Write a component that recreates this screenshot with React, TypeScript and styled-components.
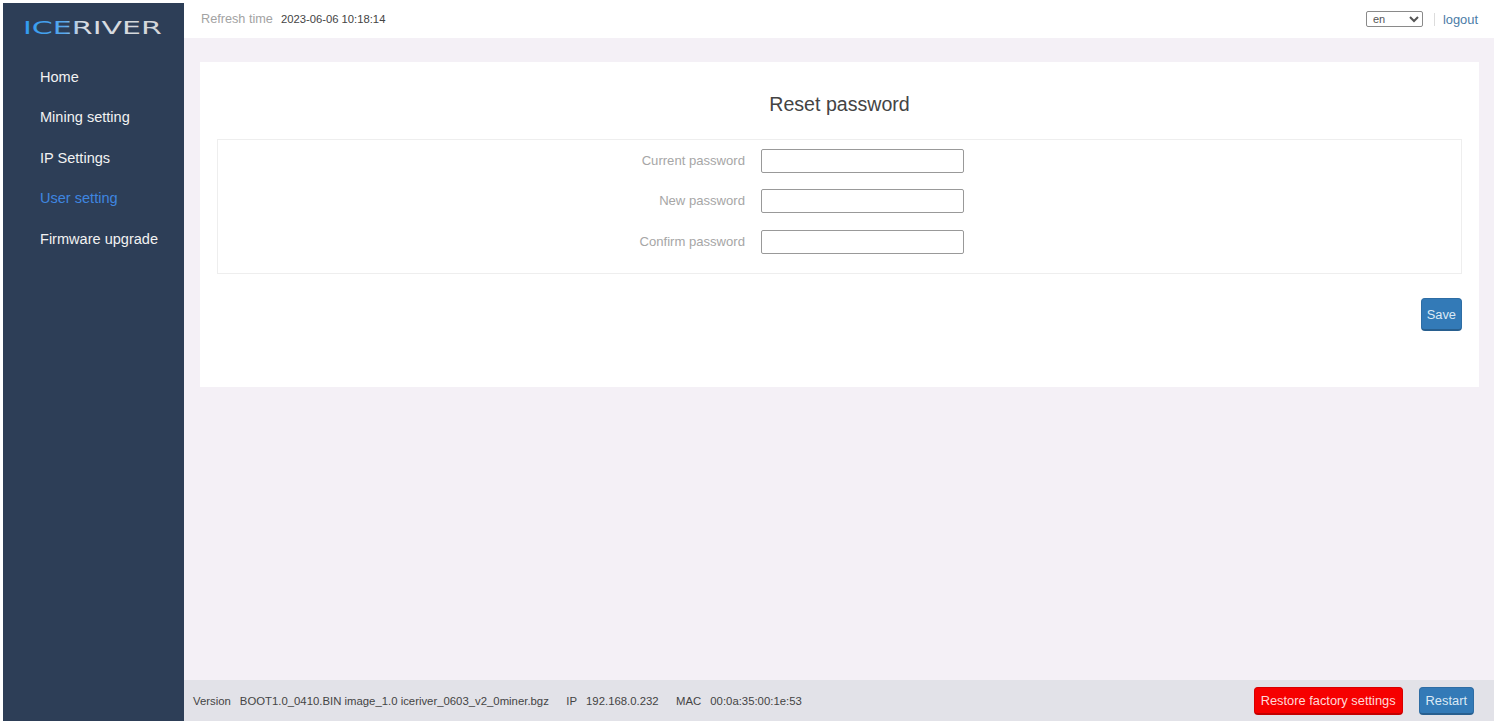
import styled, { createGlobalStyle } from "styled-components";

const GlobalStyle = createGlobalStyle`
  html, body {
    margin: 0;
    padding: 0;
    background: #fff;
    font-family: "Liberation Sans", Arial, sans-serif;
  }
`;

const Page = styled.div`
  display: flex;
  width: 1491px;
  height: 718px;
  margin: 3px 0 5px 3px;
`;

const Sidebar = styled.aside`
  width: 181px;
  flex-shrink: 0;
  background: #2d3e57;
`;

const LogoWrap = styled.div`
  height: 48px;
  padding-left: 19px;
  display: flex;
  align-items: center;
`;

const Nav = styled.nav`
  display: flex;
  flex-direction: column;
  padding: 5.5px 0 0 37px;
`;

const NavItem = styled.a<{ $active?: boolean }>`
  height: 40.5px;
  line-height: 40.5px;
  font-size: 14.55px;
  color: ${(p) => (p.$active ? "#3f86e0" : "#f2f2f2")};
  cursor: pointer;
`;

const Content = styled.div`
  flex: 1;
  display: flex;
  flex-direction: column;
  background: #f4f0f6;
`;

const Header = styled.header`
  height: 35px;
  background: #fff;
  display: flex;
  align-items: center;
  justify-content: space-between;
  padding: 0 16px 0 17px;
`;

const RefreshInfo = styled.div`
  display: flex;
  align-items: center;
  gap: 8px;
  margin-top: -3px;
`;

const RefreshLabel = styled.span`
  font-size: 12.7px;
  color: #a3a3a3;
`;

const RefreshValue = styled.span`
  font-size: 11.25px;
  color: #444;
`;

const HeaderRight = styled.div`
  display: flex;
  align-items: center;
  margin-top: -3px;
`;

const LangSelect = styled.select`
  width: 57px;
  height: 16px;
  padding: 0 0 0 2px;
  font-family: "Liberation Sans", Arial, sans-serif;
  font-size: 11px;
  color: #555;
  background: #fff;
  border: 1px solid #8a8a8a;
  border-radius: 2px;
`;

const Logout = styled.a`
  margin-left: 11px;
  padding-left: 8px;
  border-left: 1px solid #dcdcdc;
  font-size: 12.9px;
  line-height: 13px;
  color: #4a7ba6;
  cursor: pointer;
`;

const Main = styled.main`
  flex: 1;
  padding: 24px 15px 0 16px;
`;

const Card = styled.section`
  height: 325px;
  box-sizing: border-box;
  background: #fff;
  padding: 0 17px;
  display: flex;
  flex-direction: column;
`;

const Title = styled.h2`
  margin: 0;
  height: 77px;
  line-height: 85px;
  text-align: center;
  font-size: 19.6px;
  font-weight: 400;
  color: #444;
`;

const FormBox = styled.div`
  height: 135px;
  box-sizing: border-box;
  border: 1px solid #eeeeee;
  display: flex;
  flex-direction: column;
`;

const Row = styled.div`
  height: 40.5px;
  display: flex;
  align-items: center;
`;

const FieldLabel = styled.label`
  width: 527px;
  text-align: right;
  font-size: 13.1px;
  color: #a6a6a6;
`;

const Input = styled.input`
  width: 203px;
  height: 24px;
  margin: 1px 0 0 16px;
  box-sizing: border-box;
  background: #fff;
  border: 1px solid #999;
  border-radius: 2px;
  padding: 0 6px;
`;

const SaveRow = styled.div`
  display: flex;
  justify-content: flex-end;
  padding-top: 24px;
`;

const ActionButton = styled.button<{ $tone?: "blue" | "red"; $h?: number; $pad?: number }>`
  height: ${(p) => p.$h ?? 28}px;
  padding: 0 ${(p) => p.$pad ?? 6}px;
  font-family: "Liberation Sans", Arial, sans-serif;
  font-size: 12.85px;
  color: ${(p) => (p.$tone === "red" ? "#ffd9d9" : "#dbe9f5")};
  background: ${(p) => (p.$tone === "red" ? "#f60000" : "#337ab7")};
  border: 1px solid ${(p) => (p.$tone === "red" ? "#d80000" : "#2e6da4")};
  border-bottom: 2px solid ${(p) => (p.$tone === "red" ? "#c40000" : "#285f8f")};
  border-radius: 4px;
  cursor: pointer;
`;

const Footer = styled.footer`
  height: 41px;
  background: #e2e2e8;
  display: flex;
  align-items: center;
  justify-content: space-between;
  padding: 0 20px 0 9px;
`;

const FooterInfo = styled.div`
  display: flex;
  gap: 17.5px;
  font-size: 11.35px;
  color: #444;
`;

const FooterPair = styled.span`
  display: flex;
  gap: 9px;
`;

const FooterActions = styled.div`
  display: flex;
  gap: 16px;
`;

const Logo = () => (
  <svg width="142" height="22" viewBox="0 0 142 22" aria-label="ICERIVER">
    <defs>
      <linearGradient id="logoFill" x1="0" x2="1" y1="0" y2="0">
        <stop offset="0" stopColor="#2f9bf0" />
        <stop offset="0.3" stopColor="#58a8ee" />
        <stop offset="0.42" stopColor="#d9dde2" />
        <stop offset="1" stopColor="#d4d6d8" />
      </linearGradient>
    </defs>
    <text
      x="1"
      y="17.5"
      textLength="139"
      lengthAdjust="spacingAndGlyphs"
      fontFamily="'DejaVu Sans', sans-serif"
      fontSize="17.5"
      fontWeight="400"
      fill="url(#logoFill)"
    >
      ICERIVER
    </text>
  </svg>
);

const navItems = ["Home", "Mining setting", "IP Settings", "User setting", "Firmware upgrade"];
const fields = ["Current password", "New password", "Confirm password"];

const App = () => {
  return (
    <>
      <GlobalStyle />
      <Page>
        <Sidebar>
          <LogoWrap>
            <Logo />
          </LogoWrap>
          <Nav>
            {navItems.map((item) => (
              <NavItem key={item} $active={item === "User setting"}>
                {item}
              </NavItem>
            ))}
          </Nav>
        </Sidebar>
        <Content>
          <Header>
            <RefreshInfo>
              <RefreshLabel>Refresh time</RefreshLabel>
              <RefreshValue>2023-06-06 10:18:14</RefreshValue>
            </RefreshInfo>
            <HeaderRight>
              <LangSelect defaultValue="en">
                <option value="en">en</option>
              </LangSelect>
              <Logout>logout</Logout>
            </HeaderRight>
          </Header>
          <Main>
            <Card>
              <Title>Reset password</Title>
              <FormBox>
                {fields.map((field) => (
                  <Row key={field}>
                    <FieldLabel>{field}</FieldLabel>
                    <Input type="password" />
                  </Row>
                ))}
              </FormBox>
              <SaveRow>
                <ActionButton $h={33} $pad={5}>Save</ActionButton>
              </SaveRow>
            </Card>
          </Main>
          <Footer>
            <FooterInfo>
              <FooterPair>
                <span>Version</span>
                <span>BOOT1.0_0410.BIN image_1.0 iceriver_0603_v2_0miner.bgz</span>
              </FooterPair>
              <FooterPair>
                <span>IP</span>
                <span>192.168.0.232</span>
              </FooterPair>
              <FooterPair>
                <span>MAC</span>
                <span>00:0a:35:00:1e:53</span>
              </FooterPair>
            </FooterInfo>
            <FooterActions>
              <ActionButton $tone="red">Restore factory settings</ActionButton>
              <ActionButton>Restart</ActionButton>
            </FooterActions>
          </Footer>
        </Content>
      </Page>
    </>
  );
};

export default App;
